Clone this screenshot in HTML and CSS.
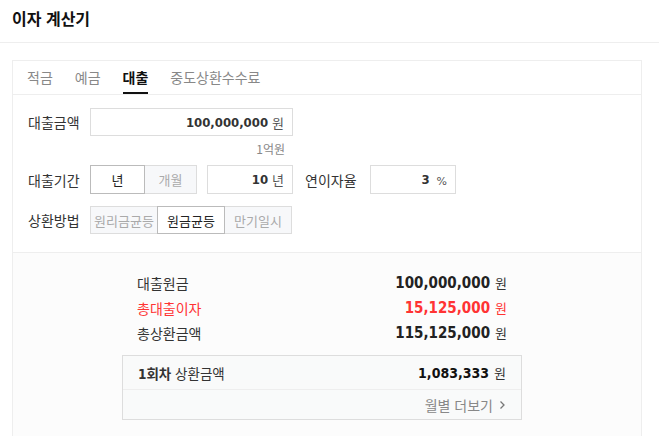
FILE: index.html
```html
<!DOCTYPE html>
<html lang="ko">
<head>
<meta charset="utf-8">
<title>이자 계산기</title>
<link rel="stylesheet" href="styles.css">
</head>
<body>
<header class="top"><h1 class="title">이자 계산기</h1></header>
<section class="card">
  <nav class="tabs">
    <span class="tab">적금</span>
    <span class="tab">예금</span>
    <span class="tab active">대출</span>
    <span class="tab">중도상환수수료</span>
  </nav>
  <div class="form">
    <div class="row">
      <span class="label">대출금액</span>
      <div class="field wide"><span class="num">100,000,000</span><span class="unit">원</span></div>
    </div>
    <div class="hint">1억원</div>
    <div class="row row-tall">
      <span class="label">대출기간</span>
      <div class="seg">
        <span class="btn on w55">년</span>
        <span class="btn off w52 no-left">개월</span>
      </div>
      <div class="field short gap10"><span class="num">10</span><span class="unit">년</span></div>
      <span class="label2">연이자율</span>
      <div class="field short"><span class="num">3</span><span class="unit pct">%</span></div>
    </div>
    <div class="row row-gap">
      <span class="label">상환방법</span>
      <div class="seg">
        <span class="btn off w67 no-right">원리금균등</span>
        <span class="btn on w68">원금균등</span>
        <span class="btn off w67 no-left">만기일시</span>
      </div>
    </div>
  </div>
  <div class="result">
    <div class="summary">
      <div class="line"><span>대출원금</span><span class="val"><b class="big">100,000,000</b><span class="won">원</span></span></div>
      <div class="line red"><span>총대출이자</span><span class="val"><b class="big">15,125,000</b><span class="won">원</span></span></div>
      <div class="line"><span>총상환금액</span><span class="val"><b class="big">115,125,000</b><span class="won">원</span></span></div>
      <div class="box">
        <div class="box-top"><span class="box-label"><b class="first">1회차</b> 상환금액</span><span class="val"><b class="mid">1,083,333</b><span class="won">원</span></span></div>
        <div class="box-bottom"><span class="more">월별 더보기</span><svg class="chev" width="7" height="10" viewBox="0 0 7 10"><path d="M1.5 1.5 L5 5 L1.5 8.5" fill="none" stroke="#777" stroke-width="1.3"/></svg></div>
      </div>
    </div>
  </div>
</section>
</body>
</html>
```
FILE: styles.css
```css
* { box-sizing: border-box; }
body {
  margin: 0;
  background: #fff;
  font-family: "Noto Sans CJK KR", "Noto Sans", sans-serif;
  color: #333;
  font-size: 14px;
}
.top {
  height: 43px;
  padding: 8px 12px 0;
  border-bottom: 1px solid #eee;
}
.title {
  margin: 0;
  font-size: 16px;
  line-height: 20px;
  font-weight: 700;
  color: #111;
}
.card {
  margin: 17px 0 0 12px;
  width: 630px;
  border: 1px solid #eee;
  border-bottom: none;
}
.tabs {
  display: flex;
  gap: 22px;
  height: 34px;
  padding-left: 14px;
  border-bottom: 1px solid #eee;
}
.tab {
  height: 33px;
  line-height: 33px;
  color: #888;
  font-size: 14px;
}
.tab.active {
  color: #111;
  font-weight: 700;
  border-bottom: 2px solid #111;
}
.form {
  padding: 13px 15px 18px;
}
.row {
  display: flex;
  align-items: center;
  height: 28px;
}
.row-tall { height: 29px; }
.row-gap { margin-top: 12px; }
.label {
  width: 62px;
  color: #333;
}
.label2 {
  margin-left: 12px;
  width: 65px;
  color: #333;
}
.field {
  height: 100%;
  border: 1px solid #ddd;
  display: flex;
  align-items: center;
  justify-content: flex-end;
  padding: 0 8px;
  background: #fff;
}
.wide { width: 203px; }
.short { width: 86px; }
.gap10 { margin-left: 10px; }
.num {
  font-family: "DejaVu Sans Condensed", "DejaVu Sans", sans-serif;
  font-stretch: condensed;
  font-weight: 700;
  font-size: 13px;
  color: #333;
}
.unit {
  margin-left: 4px;
  font-size: 13px;
  color: #555;
}
.unit.pct {
  margin-left: 7px;
  font-family: "DejaVu Sans", sans-serif;
  font-size: 11px;
  padding-top: 3px;
}
.hint {
  margin: 4px 0 8px 62px;
  width: 203px;
  padding-right: 8px;
  text-align: right;
  font-size: 12px;
  line-height: 17px;
  color: #888;
}
.seg {
  display: flex;
  height: 100%;
}
.btn {
  display: flex;
  align-items: center;
  justify-content: center;
  height: 100%;
  font-size: 13px;
}
.btn.on {
  background: #fff;
  border: 1px solid #bbb;
  color: #222;
}
.btn.off {
  background: #f7f8fa;
  border: 1px solid #ddd;
  color: #aaa;
}
.no-left { border-left: none !important; }
.no-right { border-right: none !important; }
.w55 { width: 55px; }
.w52 { width: 52px; }
.w67 { width: 67px; }
.w68 { width: 68px; }
.result {
  background: #fcfcfc;
  border-top: 1px solid #eee;
  padding: 17px 0 30px 109px;
}
.summary { width: 400px; }
.line {
  display: flex;
  justify-content: space-between;
  align-items: center;
  padding: 0 15px;
  height: 25px;
  color: #333;
}
.line.red, .line.red .big, .line.red .won { color: #f33; }
.val { display: flex; align-items: baseline; }
.big {
  font-family: "DejaVu Sans Condensed", "DejaVu Sans", sans-serif;
  font-stretch: condensed;
  font-weight: 700;
  font-size: 15px;
  color: #222;
}
.mid {
  font-family: "DejaVu Sans Condensed", "DejaVu Sans", sans-serif;
  font-stretch: condensed;
  font-weight: 700;
  font-size: 14px;
  color: #111;
}
.won {
  margin-left: 5px;
  font-size: 13px;
  color: #333;
}
.box {
  margin-top: 10px;
  border: 1px solid #ddd;
  background: #f9fafa;
}
.box-top {
  height: 34px;
  display: flex;
  justify-content: space-between;
  align-items: center;
  padding: 0 15px;
  border-bottom: 1px solid #eee;
}
.box-label { font-size: 13.5px; }
.first {
  font-family: "DejaVu Sans Condensed", "Noto Sans CJK KR", sans-serif;
  font-weight: 700;
  color: #333;
}
.box-bottom {
  height: 29px;
  display: flex;
  justify-content: flex-end;
  align-items: center;
  padding: 0 15px;
  gap: 6px;
}
.more { color: #888; }
.chev { display: block; }
```
